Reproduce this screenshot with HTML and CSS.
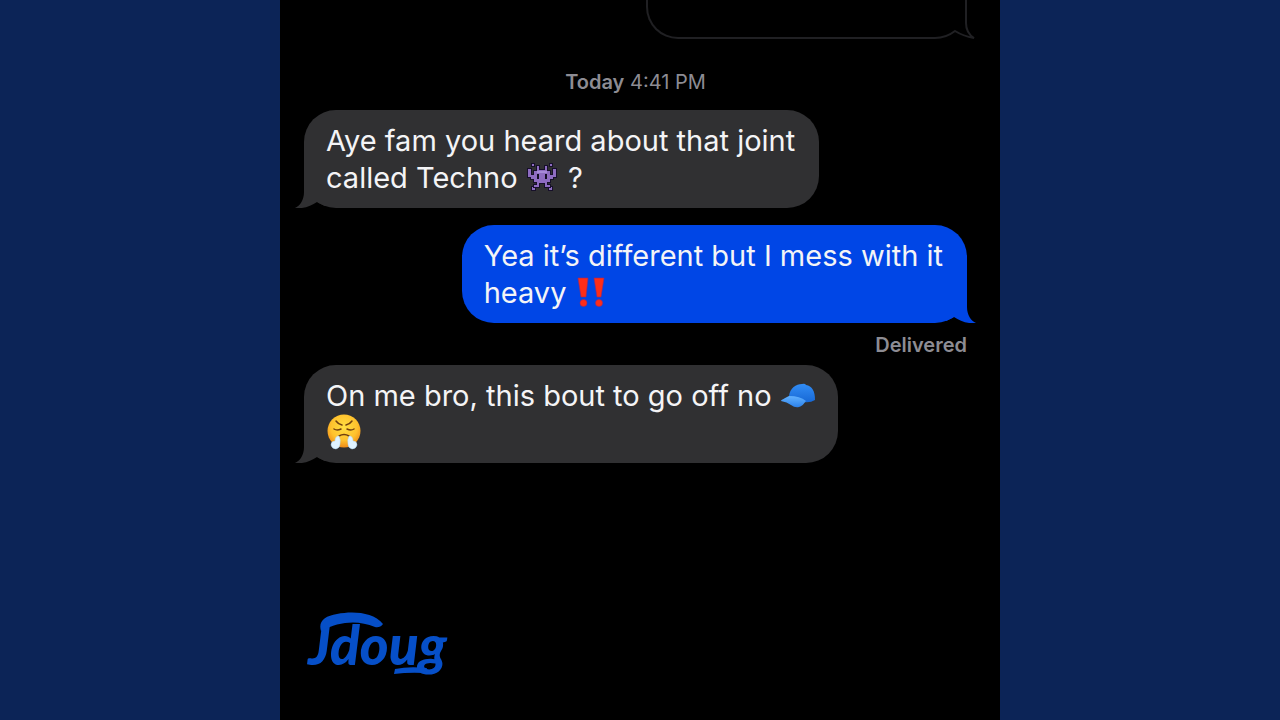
FILE: index.html
```html
<!DOCTYPE html>
<html lang="en">
<head>
<meta charset="utf-8">
<meta name="viewport" content="width=device-width, initial-scale=1">
<title>Messages</title>
<link rel="stylesheet" href="styles.css">
</head>
<body>
<main class="phone">
  <div class="bubble outline">
    <svg class="tail" viewBox="0 0 48 48" aria-hidden="true"><path class="tail-cover" d="M2 0H39V36Q40 45 48 48H2Z"/><path class="tail-line" d="M2 47H8Q19 47 28 40Q36 45 47 47Q39 42 39 32V0"/></svg>
  </div>
  <p class="stamp"><strong>Today</strong> 4:41 PM</p>
  <div class="bubble received">
    Aye fam you heard about that joint<br>called Techno
    <svg class="emoji invader" viewBox="0 0 32 30" role="img" aria-label="alien monster">
      <g fill="#8e6cc1" stroke="#17102a" stroke-width="2" paint-order="stroke">
        <path d="M6 2h2v2H6zM24 2h2v2h-2zM6 25h3v3H6zM23 25h3v3h-3z"/>
        <path d="M2 7h3v6h3V9h3V4h2v4h6V4h2v5h3v4h3V7h3v8h-3v2h-3v3h-3v3h3v2h-5v-4h-6v4H8v-2h3v-3H8v-3H5v-2H2z"/>
      </g>
      <path fill="#a78bd8" d="M11 9h10v2H11z"/>
      <path fill="#140d24" d="M11 12h2v5h-2zM19 12h2v5h-2z"/>
    </svg>
    ?
    <svg class="tail" viewBox="0 0 32 40" aria-hidden="true"><path d="M10 0V24C10 32 6 38 1 40C10 41 17 38 23 34Q27 36 31 38V0Z"/></svg>
  </div>
  <div class="bubble sent">
    Yea it’s different but I mess with it<br>heavy
    <svg class="emoji bangs" viewBox="0 0 28 30" role="img" aria-label="double exclamation mark"><g fill="#ff2d18" stroke="#a3265c" stroke-width=".6"><path d="M1 1h10L9 20H4zM17 1h10l-3 19h-4z"/><circle cx="6.500" cy="26" r="3.500"/><circle cx="22" cy="26" r="3.500"/></g></svg>
    <svg class="tail" viewBox="0 0 32 40" aria-hidden="true"><path d="M10 0V24C10 32 6 38 1 40C10 41 17 38 23 34Q27 36 31 38V0Z"/></svg>
  </div>
  <p class="status">Delivered</p>
  <div class="bubble received">
    On me bro, this bout to go off no
    <svg class="emoji cap" viewBox="0 0 36 26" role="img" aria-label="cap">
      <defs><linearGradient id="crown" x2="0" y2="1"><stop stop-color="#328df5"/><stop offset="1" stop-color="#1768d5"/></linearGradient><linearGradient id="brim" x2="0" y2="1"><stop stop-color="#62b2ff"/><stop offset="1" stop-color="#2b80e9"/></linearGradient></defs>
      <path fill="url(#crown)" d="M9 13C10 5 16 1 22 1q3-1 4 1c6 1 9 6 9 15q-5 3-11 2z"/>
      <path fill="url(#brim)" d="M9 13C5 15 1 17 1 18q6 1 10 4 4 3 8 2c4-1 6-5 7-6Q20 13 9 13z"/>
    </svg><br>
    <svg class="emoji face" viewBox="0 0 36 36" role="img" aria-label="face with steam from nose">
      <defs><radialGradient id="skin" cx=".5" cy=".38" r=".62"><stop stop-color="#ffdf42"/><stop offset=".65" stop-color="#ffc12d"/><stop offset="1" stop-color="#ef8c18"/></radialGradient></defs>
      <circle cx="18" cy="17" r="16.500" fill="url(#skin)"/>
      <g fill="none" stroke="#72400f" stroke-width="1.500" stroke-linecap="round"><path d="M10 7q2 3 6 4M26 7q-2 3-6 4M8 15q3 2 7 0M21 15q4 2 7 0"/><path d="M13 22q5-3 10 0"/></g>
      <path fill="#dff2ff" stroke="#b5d8ef" stroke-width=".5" d="M13 22q-4 0-4 5-4 0-4 4 1 4 5 4 4-1 4-5 1-4-1-8zM23 22q4 0 4 5 4 0 4 4-1 4-5 4-4-1-4-5-1-4 1-8z"/>
    </svg>
    <svg class="tail" viewBox="0 0 32 40" aria-hidden="true"><path d="M10 0V24C10 32 6 38 1 40C10 41 17 38 23 34Q27 36 31 38V0Z"/></svg>
  </div>
  <div class="brand">
    <span>Jdoug</span>
    <svg class="swash" viewBox="0 0 146 64" aria-hidden="true"><path d="M14 19C11 9 18 4 30 2C46-1 66 0 76 12Q73 16 68 15C51 8 33 9 14 19Z"/><path d="M88 57Q102 54 120 56L118 61Q102 60 87 62Z"/></svg>
  </div>
</main>
</body>
</html>
```
FILE: styles.css
```css
* {
  box-sizing: border-box;
}

body {
  margin: 0;
  background: #0c2457;
  font-family: Inter, "Liberation Sans", sans-serif;
}

p {
  margin: 0;
}

.phone {
  display: flex;
  flex-direction: column;
  align-items: flex-start;
  max-width: 720px;
  min-height: 100vh;
  margin: 0 auto;
  padding: 0 33px 44px 24px;
  background: #000;
}

.bubble {
  position: relative;
  padding: 12px 24px 12px 22px;
  border-radius: 32px;
  color: #f4f4f6;
  font-size: 29px;
  line-height: 37px;
}

.received {
  background: #303032;
}

.sent {
  align-self: flex-end;
  margin-top: 17px;
  background: #0046e6;
}

.outline {
  align-self: flex-end;
  width: 321px;
  height: 39px;
  padding: 0;
  border: 2px solid #202023;
  border-top: 0;
  border-radius: 0 0 32px 32px;
}

.tail {
  position: absolute;
  bottom: 0;
  left: -10px;
  width: 32px;
  height: 40px;
  fill: #303032;
}

.sent .tail {
  right: -10px;
  left: auto;
  fill: #0046e6;
  transform: scaleX(-1);
}

.outline .tail {
  right: -10px;
  bottom: -2px;
  left: auto;
  width: 48px;
  height: 48px;
}

.tail-cover {
  fill: #000;
}

.tail-line {
  fill: none;
  stroke: #202023;
  stroke-width: 2;
}

.stamp,
.status {
  color: #8d8c93;
  font-size: 20px;
  line-height: 24px;
}

.stamp {
  align-self: center;
  margin: 31px 0 16px;
}

.stamp strong,
.status {
  font-weight: 600;
}

.status {
  align-self: flex-end;
  margin: 10px 0 8px;
}

.emoji {
  display: inline-block;
  vertical-align: middle;
}

.invader {
  width: 32px;
  height: 30px;
  margin: -6px 2px 0 0;
}

.bangs {
  width: 28px;
  height: 30px;
  margin: -6px 4px 0 2px;
}

.cap {
  width: 36px;
  height: 26px;
  margin: -4px -2px 0 0;
}

.face {
  width: 36px;
  height: 36px;
  margin: -6px 0 0;
}

.brand {
  position: relative;
  margin-top: auto;
  padding-left: 4px;
  color: #064fc8;
  font: italic 900 55px/64px Lato, sans-serif;
}

.swash {
  position: absolute;
  top: 0;
  left: 3px;
  width: 146px;
  height: 64px;
  fill: #064fc8;
}
```
